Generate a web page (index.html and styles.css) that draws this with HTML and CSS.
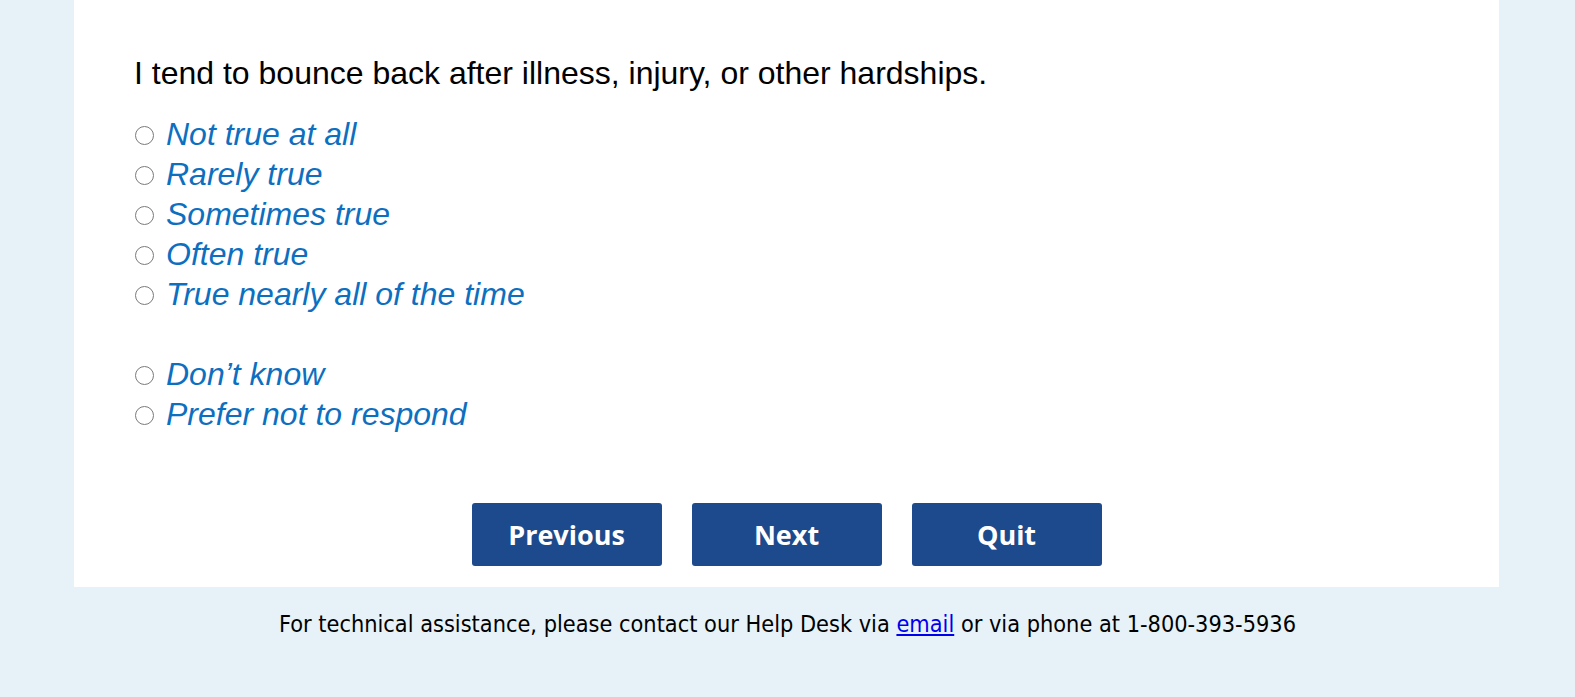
FILE: index.html
```html
<!DOCTYPE html>
<html lang="en">
<head>
<meta charset="utf-8">
<title>Survey</title>
<link rel="stylesheet" href="styles.css">
</head>
<body>
<main class="panel">
  <p class="question">I tend to bounce back after illness, injury, or other hardships.</p>
  <ul class="options">
    <li class="option"><span class="radio"></span><span class="label">Not true at all</span></li>
    <li class="option"><span class="radio"></span><span class="label">Rarely true</span></li>
    <li class="option"><span class="radio"></span><span class="label">Sometimes true</span></li>
    <li class="option"><span class="radio"></span><span class="label">Often true</span></li>
    <li class="option"><span class="radio"></span><span class="label">True nearly all of the time</span></li>
  </ul>
  <ul class="options extra">
    <li class="option"><span class="radio"></span><span class="label">Don’t know</span></li>
    <li class="option"><span class="radio"></span><span class="label">Prefer not to respond</span></li>
  </ul>
  <div class="buttons">
    <button class="btn">Previous</button>
    <button class="btn">Next</button>
    <button class="btn">Quit</button>
  </div>
</main>
<footer class="footer">
  For technical assistance, please contact our Help Desk via <a href="#">email</a> or via phone at 1-800-393-5936
</footer>
</body>
</html>
```

FILE: styles.css
```css
html, body {
  margin: 0;
  padding: 0;
}
body {
  background: #e6f2f7;
  font-family: "Liberation Sans", Arial, sans-serif;
  height: 697px;
  overflow: hidden;
}
.panel {
  background: #ffffff;
  width: 1425px;
  margin: 0 0 0 74px;
  padding: 55px 60px 21px 60px;
  box-sizing: border-box;
}
.question {
  margin: 0 0 22px 0;
  font-size: 32px;
  line-height: 37px;
  color: #000;
}
.options {
  list-style: none;
  margin: 0;
  padding: 0;
}
.options.extra {
  margin-top: 40px;
}
.option {
  display: flex;
  align-items: center;
  gap: 12px;
  height: 40px;
  padding-left: 1px;
}
.radio {
  width: 17px;
  height: 17px;
  border: 1.5px solid #7a7a7a;
  border-radius: 50%;
  flex: none;
  margin-top: 2px;
}
.label {
  font-style: italic;
  font-size: 32px;
  line-height: 40px;
  color: #0d6fbf;
}
.buttons {
  display: flex;
  justify-content: center;
  gap: 30px;
  margin-top: 69px;
}
.btn {
  width: 190px;
  height: 63px;
  background: #1d4a8c;
  color: #fff;
  border: none;
  border-radius: 3px;
  font-family: "Open Sans", sans-serif;
  font-weight: 700;
  font-size: 27px;
  padding: 0;
}
.footer {
  text-align: center;
  font-family: "DejaVu Sans Condensed", "DejaVu Sans", sans-serif;
  font-size: 23.3px;
  line-height: 27px;
  padding-top: 23px;
  color: #000;
}
.footer a {
  color: #0000ee;
}
```
